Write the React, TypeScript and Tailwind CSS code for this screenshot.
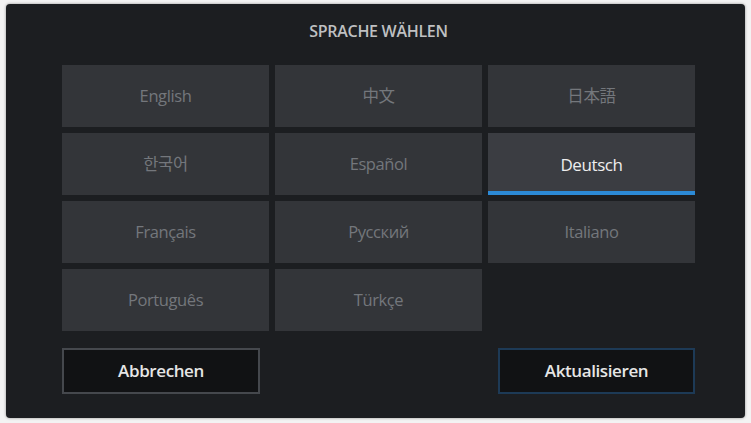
import React from "react";

const langs = [
  "English",
  "中文",
  "日本語",
  "한국어",
  "Español",
  "Deutsch",
  "Français",
  "Русский",
  "Italiano",
  "Português",
  "Türkçe",
];

export default function App() {
  return (
    <div
      className="w-[751px] h-[423px] bg-[#f3f3f3] pt-[4px] pl-[6px]"
      style={{ fontFamily: '"Open Sans", "Noto Sans CJK JP", "Noto Sans CJK KR", sans-serif' }}
    >
      <div className="w-[739px] h-[414px] bg-[#1c1e21] rounded-[4px] shadow-[0_0_3px_rgba(0,0,0,0.4)] flex flex-col pl-[56px] pr-[50px]">
        <div className="h-[61px] flex justify-center pt-[17px]">
          <span className="text-[16px] leading-[20px] font-semibold text-[#bfc0c2] tracking-[-0.3px]">
            SPRACHE WÄHLEN
          </span>
        </div>
        <div className="grid grid-cols-3 gap-[6px]">
          {langs.map((l) => {
            const active = l === "Deutsch";
            return (
              <div
                key={l}
                className={
                  active
                    ? "relative h-[62px] bg-[#3b3d42] flex items-center justify-center pt-[1px]"
                    : "relative h-[62px] bg-[#333539] flex items-center justify-center pt-[1px]"
                }
              >
                <span
                  className={
                    active
                      ? "text-[17px] font-medium text-[#eeeeee] tracking-[-0.4px]"
                      : "text-[16.5px] text-[#74777c] tracking-[-0.4px]"
                  }
                >
                  {l}
                </span>
                {active && (
                  <div className="absolute left-0 right-0 bottom-0 h-[4px] bg-[#2c8ad6]" />
                )}
              </div>
            );
          })}
        </div>
        <div className="flex justify-between mt-[17px]">
          <div className="w-[198px] h-[46px] border-2 border-[#45484d] bg-[#111214] flex items-center justify-center">
            <span className="text-[17px] font-semibold text-[#e6e6e6] tracking-[-0.4px]">Abbrechen</span>
          </div>
          <div className="w-[197px] h-[46px] border-2 border-[#1d3a56] bg-[#111214] flex items-center justify-center">
            <span className="text-[17px] font-semibold text-[#e6e6e6] tracking-[-0.4px]">Aktualisieren</span>
          </div>
        </div>
      </div>
    </div>
  );
}
